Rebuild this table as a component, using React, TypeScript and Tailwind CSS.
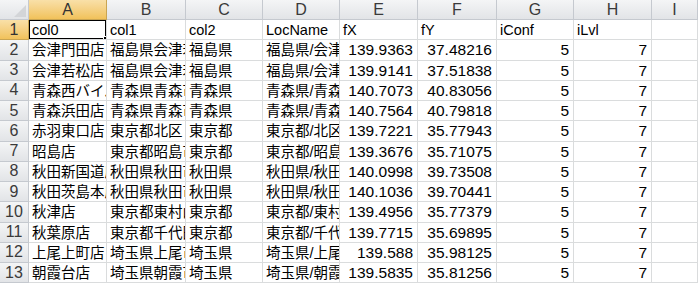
import React from 'react';

type Row = [string, string, string, string, string, string, string, string];

const rows: Row[] = [
  ['col0', 'col1', 'col2', 'LocName', 'fX', 'fY', 'iConf', 'iLvl'],
  ['会津門田店', '福島県会津若', '福島県', '福島県/会津', '139.9363', '37.48216', '5', '7'],
  ['会津若松店', '福島県会津若', '福島県', '福島県/会津', '139.9141', '37.51838', '5', '7'],
  ['青森西バイパ', '青森県青森市', '青森県', '青森県/青森', '140.7073', '40.83056', '5', '7'],
  ['青森浜田店', '青森県青森市', '青森県', '青森県/青森', '140.7564', '40.79818', '5', '7'],
  ['赤羽東口店', '東京都北区', '東京都', '東京都/北区', '139.7221', '35.77943', '5', '7'],
  ['昭島店', '東京都昭島市', '東京都', '東京都/昭島', '139.3676', '35.71075', '5', '7'],
  ['秋田新国道店', '秋田県秋田市', '秋田県', '秋田県/秋田', '140.0998', '39.73508', '5', '7'],
  ['秋田茨島本店', '秋田県秋田市', '秋田県', '秋田県/秋田', '140.1036', '39.70441', '5', '7'],
  ['秋津店', '東京都東村山', '東京都', '東京都/東村', '139.4956', '35.77379', '5', '7'],
  ['秋葉原店', '東京都千代田', '東京都', '東京都/千代', '139.7715', '35.69895', '5', '7'],
  ['上尾上町店', '埼玉県上尾市', '埼玉県', '埼玉県/上尾', '139.588', '35.98125', '5', '7'],
  ['朝霞台店', '埼玉県朝霞市', '埼玉県', '埼玉県/朝霞', '139.5835', '35.81256', '5', '7'],
  ['', '', '', '', '', '', '', ''],
];

const letters = ['A', 'B', 'C', 'D', 'E', 'F', 'G', 'H', 'I'];

const headerCls =
  'flex items-center justify-center border-r border-b border-[#c5c9cf] bg-linear-to-b from-[#f4f5f6] to-[#e2e4e7] text-[#3a3a3a] text-[16px]';
const selHeaderCls =
  'flex items-center justify-center border-r border-b border-[#c9a552] bg-linear-to-b from-[#f9e0a8] to-[#f1c25a] text-[#333] text-[16px]';

export default function App() {
  return (
    <div
      className="w-[698px] h-[283px] overflow-hidden bg-white text-black"
      style={{ fontFamily: '"Liberation Sans", "Noto Sans CJK JP", sans-serif' }}
    >
      <div className="grid grid-cols-[29px_78px_79px_77px_77px_78px_79px_77px_78px_1fr] grid-rows-[20px] auto-rows-[20.25px]">
        {/* corner */}
        <div className="relative border-r border-b border-[#c5c9cf] bg-linear-to-b from-[#f4f5f6] to-[#e2e4e7]">
          <svg className="absolute right-[2px] bottom-[2px]" width="12" height="12" viewBox="0 0 12 12">
            <polygon points="12,0 12,12 0,12" fill="#d3d5d8" />
          </svg>
        </div>
        {letters.map((l, i) => (
          <div key={l} className={i === 0 ? selHeaderCls : headerCls}>
            {l}
          </div>
        ))}

        {rows.map((r, ri) => (
          <React.Fragment key={ri}>
            <div className={ri === 0 ? selHeaderCls : headerCls}>{ri + 1}</div>
            {r.map((v, ci) => {
              const numeric = ri > 0 && ci >= 4;
              return (
                <div
                  key={ci}
                  className={`relative border-r border-b border-[#dadcdd] pl-[3px] overflow-hidden whitespace-nowrap leading-[20px] ${
                    numeric ? 'text-right pr-[4px] text-[15.5px]' : 'text-[14.5px]'
                  }`}
                >
                  {v}
                  {ri === 0 && ci === 0 && (
                    <>
                      <span className="absolute -left-[1px] -top-[1px] w-[79px] h-[21px] border-2 border-black" />
                      <span className="absolute right-[-3px] bottom-[-3px] w-[6px] h-[6px] bg-black border border-white" />
                    </>
                  )}
                </div>
              );
            })}
            <div className="border-r border-b border-[#dadcdd]" />
          </React.Fragment>
        ))}
      </div>
    </div>
  );
}
